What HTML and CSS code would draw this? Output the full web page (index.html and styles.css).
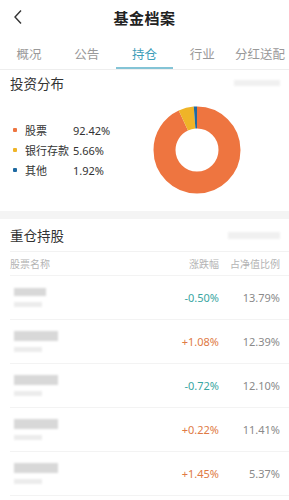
FILE: index.html
```html
<!DOCTYPE html>
<html lang="zh-CN">
<head>
<meta charset="utf-8">
<link rel="stylesheet" href="styles.css">
</head>
<body>
<div class="page">
  <header class="nav">
    <svg class="back" width="10" height="16" viewBox="0 0 10 16"><path d="M8 1.5 L2 8 L8 14.5" fill="none" stroke="#333" stroke-width="1.4"/></svg>
    <div class="title">基金档案</div>
  </header>
  <nav class="tabs">
    <div class="tab">概况</div>
    <div class="tab">公告</div>
    <div class="tab active">持仓</div>
    <div class="tab">行业</div>
    <div class="tab">分红送配</div>
  </nav>

  <section class="dist">
    <div class="sec-head">
      <div class="sec-title">投资分布</div>
      <div class="blur-tag"></div>
    </div>
    <div class="dist-body">
      <ul class="legend">
        <li><span class="dot orange"></span><span class="lname">股票</span><span class="lval">92.42%</span></li>
        <li><span class="dot yellow"></span><span class="lname">银行存款</span><span class="lval">5.66%</span></li>
        <li><span class="dot blue"></span><span class="lname">其他</span><span class="lval">1.92%</span></li>
      </ul>
      <svg class="donut" width="88" height="88" viewBox="0 0 88 88">
        <g transform="rotate(-90 44 44)">
          <circle cx="44" cy="44" r="32.5" fill="none" stroke="#ee7540" stroke-width="22" stroke-dasharray="189.79 204.2" stroke-dashoffset="0"/>
          <circle cx="44" cy="44" r="32.5" fill="none" stroke="#efb428" stroke-width="22" stroke-dasharray="11.62 204.2" stroke-dashoffset="-189.79"/>
          <circle cx="44" cy="44" r="32.5" fill="none" stroke="#1e6aa3" stroke-width="22" stroke-dasharray="3.94 204.2" stroke-dashoffset="-201.41"/>
        </g>
      </svg>
    </div>
  </section>

  <div class="band"></div>

  <section class="hold">
    <div class="sec-head hold-head">
      <div class="sec-title">重仓持股</div>
      <div class="blur-tag wide"></div>
    </div>
    <div class="row th">
      <div class="c-name">股票名称</div>
      <div class="c-chg">涨跌幅</div>
      <div class="c-pct">占净值比例</div>
    </div>
    <div class="row">
      <div class="c-name"><span class="b1"></span><span class="b2"></span></div>
      <div class="c-chg down">-0.50%</div>
      <div class="c-pct">13.79%</div>
    </div>
    <div class="row">
      <div class="c-name"><span class="b1 long"></span><span class="b2"></span></div>
      <div class="c-chg up">+1.08%</div>
      <div class="c-pct">12.39%</div>
    </div>
    <div class="row">
      <div class="c-name"><span class="b1 long"></span><span class="b2"></span></div>
      <div class="c-chg down">-0.72%</div>
      <div class="c-pct">12.10%</div>
    </div>
    <div class="row">
      <div class="c-name"><span class="b1 long"></span><span class="b2"></span></div>
      <div class="c-chg up">+0.22%</div>
      <div class="c-pct">11.41%</div>
    </div>
    <div class="row">
      <div class="c-name"><span class="b1 long"></span><span class="b2"></span></div>
      <div class="c-chg up">+1.45%</div>
      <div class="c-pct">5.37%</div>
    </div>
  </section>
</div>
</body>
</html>
```

FILE: styles.css
```css
* { box-sizing: border-box; margin: 0; padding: 0; }
html, body { background: #fff; }
body {
  font-family: "Noto Sans CJK SC", "Noto Sans", sans-serif;
  color: #333;
  width: 289px;
  overflow: hidden;
}
.page { width: 289px; }

.nav {
  position: relative;
  height: 34px;
  display: flex;
  align-items: center;
  justify-content: center;
}
.back { position: absolute; left: 13px; top: 9px; }
.title { font-size: 15px; font-weight: 700; color: #222; letter-spacing: 0.5px; }

.tabs {
  display: flex;
  height: 36px;
  border-bottom: 1px solid #eeeeee;
}
.tab {
  flex: 1;
  display: flex;
  align-items: center;
  justify-content: center;
  font-size: 12.5px;
  color: #999;
  border-bottom: 2px solid transparent;
  padding-top: 5px;
}
.tab.active { color: #3d9db8; border-bottom-color: #84c4d6; }

.sec-head {
  display: flex;
  justify-content: space-between;
  align-items: center;
  padding: 0 9px 0 10px;
}
.sec-title { font-size: 13.5px; color: #333; }
.blur-tag {
  width: 46px; height: 6px;
  background: #f0f0f0;
  filter: blur(1px);
}
.blur-tag.wide { width: 52px; height: 7px; }

.dist { height: 141px; }
.dist .sec-head { height: 26px; }
.dist-body { display: flex; align-items: flex-start; }
.legend { list-style: none; padding: 24px 0 0 13px; width: 153px; }
.legend li { display: flex; align-items: center; height: 20px; font-size: 11px; color: #333; }
.dot { width: 4px; height: 4px; border-radius: 1px; margin-right: 8px; }
.dot.orange { background: #ee7540; }
.dot.yellow { background: #efb428; }
.dot.blue { background: #1e6aa3; }
.lname { width: 48px; }
.lval { font-family: "Noto Sans", sans-serif; font-size: 11px; }
.donut { margin-top: 10px; }

.band { height: 8px; background: #f4f4f4; }

.hold-head { height: 33px; border-bottom: 1px solid #f2f2f2; margin: 0 0 0 10px; padding-left: 0; }
.hold .row { margin-left: 10px; }
.row {
  display: flex;
  align-items: center;
  height: 44px;
  border-bottom: 1px solid #f3f3f3;
  padding-right: 9px;
  font-family: "Noto Sans", sans-serif;
  font-size: 11px;
}
.row.th { height: 24px; font-size: 10px; color: #b4b4b4; font-family: "Noto Sans CJK SC", sans-serif; }
.c-name { flex: 1; display: flex; flex-direction: column; gap: 6px; }
.c-chg { width: 60px; text-align: right; }
.c-pct { width: 61px; text-align: right; color: #8a8a8a; }
.th .c-pct, .th .c-chg { color: #b4b4b4; }
.down { color: #3aa6a2; }
.up { color: #e07a45; }
.b1 { display: block; width: 32px; height: 8px; margin-left: 4px; background: #d8d8d8; filter: blur(1.2px); }
.b1.long { width: 44px; height: 10px; }
.b2 { display: block; width: 28px; height: 5px; margin-left: 4px; background: #ececec; filter: blur(1.2px); }
```
